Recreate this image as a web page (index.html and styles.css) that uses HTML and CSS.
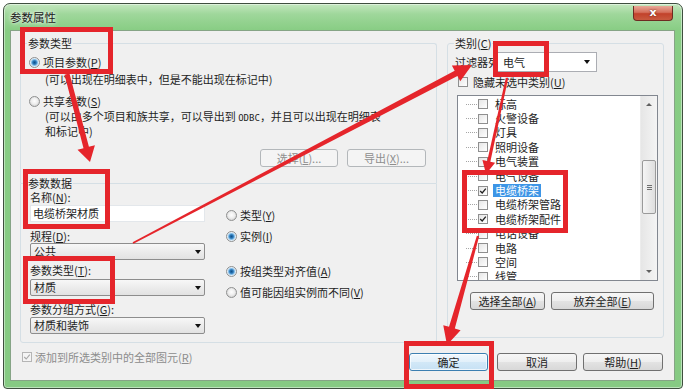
FILE: index.html
```html
<!DOCTYPE html>
<html lang="zh-CN">
<head>
<meta charset="utf-8">
<title>参数属性</title>
<link rel="stylesheet" href="styles.css">
</head>
<body>
<div class="window">
  <div class="titlebar">
    <span class="title">参数属性</span>
    <div class="close">x</div>
  </div>
  <div class="client">
    <div class="main">
      <div class="leftcol">
        <div class="group g1">
          <div class="legend">参数类型</div>
          <div class="opt r1"><span class="radio on"></span>项目参数(<u>P</u>)</div>
          <div class="desc d1">(可以出现在明细表中，但是不能出现在标记中)</div>
          <div class="opt r2"><span class="radio"></span>共享参数(<u>S</u>)</div>
          <div class="desc d2">(可以由多个项目和族共享，可以导出到 <span class="mono">ODBC</span>，并且可以出现在明细表<br>和标记中)</div>
          <div class="btnrow">
            <div class="btn dis w78">选择(<u>L</u>)...</div>
            <div class="btn dis w79">导出(<u>X</u>)...</div>
          </div>
        </div>
        <div class="group g2">
          <div class="legend">参数数据</div>
          <div class="g2body">
            <div class="fields">
              <div class="lbl l1">名称(<u>N</u>):</div>
              <div class="input">电缆桥架材质</div>
              <div class="lbl l2">规程(<u>D</u>):</div>
              <div class="select s1"><span>公共</span><span class="caret"></span></div>
              <div class="lbl l3">参数类型(<u>T</u>):</div>
              <div class="select s2"><span>材质</span><span class="caret"></span></div>
              <div class="lbl l4">参数分组方式(<u>G</u>):</div>
              <div class="select s3"><span>材质和装饰</span><span class="caret"></span></div>
            </div>
            <div class="radios">
              <div class="opt ro1"><span class="radio"></span>类型(<u>Y</u>)</div>
              <div class="opt ro2"><span class="radio on"></span>实例(<u>I</u>)</div>
              <div class="opt ro3"><span class="radio on"></span>按组类型对齐值(<u>A</u>)</div>
              <div class="opt ro4"><span class="radio"></span>值可能因组实例而不同(<u>V</u>)</div>
            </div>
          </div>
        </div>
      </div>
      <div class="group gr">
        <div class="legend lr">类别(<u>C</u>)</div>
        <div class="filter">
          <div class="flabel">过滤器列表(<u>F</u>):</div>
          <div class="combo"><span>电气</span><span class="caret"></span></div>
        </div>
        <div class="hide"><span class="cbox"></span>隐藏未选中类别(<u>U</u>)</div>
        <div class="list">
          <div class="rows">
            <div class="row"><span class="tree"></span><span class="cbox"></span><span class="txt">标高</span></div>
            <div class="row"><span class="tree"></span><span class="cbox"></span><span class="txt">火警设备</span></div>
            <div class="row"><span class="tree"></span><span class="cbox"></span><span class="txt">灯具</span></div>
            <div class="row"><span class="tree"></span><span class="cbox"></span><span class="txt">照明设备</span></div>
            <div class="row"><span class="tree"></span><span class="cbox"></span><span class="txt">电气装置</span></div>
            <div class="row"><span class="tree"></span><span class="cbox"></span><span class="txt">电气设备</span></div>
            <div class="row"><span class="tree"></span><span class="cbox"><svg viewBox="0 0 10 10" width="8" height="8"><path d="M1.5 5 L4 7.5 L8.5 2" fill="none" stroke="#222" stroke-width="1.6"/></svg></span><span class="txt sel">电缆桥架</span></div>
            <div class="row"><span class="tree"></span><span class="cbox"></span><span class="txt">电缆桥架管路</span></div>
            <div class="row"><span class="tree"></span><span class="cbox"><svg viewBox="0 0 10 10" width="8" height="8"><path d="M1.5 5 L4 7.5 L8.5 2" fill="none" stroke="#222" stroke-width="1.6"/></svg></span><span class="txt">电缆桥架配件</span></div>
            <div class="row"><span class="tree"></span><span class="cbox"></span><span class="txt">电话设备</span></div>
            <div class="row"><span class="tree"></span><span class="cbox"></span><span class="txt">电路</span></div>
            <div class="row"><span class="tree"></span><span class="cbox"></span><span class="txt">空间</span></div>
            <div class="row"><span class="tree"></span><span class="cbox"></span><span class="txt">线管</span></div>
          </div>
          <div class="scroll">
            <div class="sarrow"><span class="tri up"></span></div>
            <div class="thumb"><span class="grip"></span><span class="grip"></span><span class="grip"></span></div>
            <div class="spacer"></div>
            <div class="sarrow"><span class="tri down"></span></div>
          </div>
        </div>
        <div class="gbtns">
          <div class="btn w75">选择全部(<u>A</u>)</div>
          <div class="btn w103">放弃全部(<u>E</u>)</div>
        </div>
      </div>
    </div>
    <div class="footer">
      <div class="chkall"><span class="cbox dis"><svg viewBox="0 0 10 10" width="8" height="8"><path d="M1.5 5 L4 7.5 L8.5 2" fill="none" stroke="#a8a8a8" stroke-width="1.4"/></svg></span>添加到所选类别中的全部图元(<u>R</u>)</div>
      <div class="fbtns">
        <div class="btn ok">确定</div>
        <div class="btn cancel">取消</div>
        <div class="btn help">帮助(<u>H</u>)</div>
      </div>
    </div>
  </div>
</div>
<svg class="overlay" width="686" height="392" viewBox="0 0 686 392">
  <g fill="none" stroke="#e5252b" stroke-width="5">
    <rect x="22.5" y="29.5" width="88" height="42"/>
    <rect x="25.5" y="171.5" width="82" height="55"/>
    <rect x="25.5" y="258.5" width="87" height="43"/>
    <rect x="495.5" y="43.5" width="51" height="31"/>
    <rect x="464.5" y="172.5" width="101" height="58"/>
    <rect x="406.5" y="343.5" width="85" height="43"/>
  </g>
  <g fill="#e5252b">
    <polygon points="69.42,73.37 88.92,146.78 94.92,145.21 90,162 77.50,149.77 83.50,148.20 64.58,74.63"/>
    <polygon points="133.42,243.80 457.45,76.03 460.24,81.34 472,65 451.88,65.40 454.67,70.71 132.58,242.20"/>
    <polygon points="508.17,78.26 490.34,161.64 495.13,162.69 486,174 482.43,159.91 487.22,160.96 505.83,77.74"/>
    <polygon points="479.15,236.33 454.81,328.51 460.58,330.15 447,345 443.26,325.23 449.03,326.87 476.85,235.67"/>
  </g>
</svg>
</body>
</html>
```

FILE: styles.css
```css
* { box-sizing: border-box; }
html, body { margin: 0; padding: 0; background: #fff; }
body {
  position: relative;
  width: 686px;
  height: 392px;
  overflow: hidden;
  font-family: "Noto Sans CJK SC", "Microsoft YaHei", sans-serif;
  font-size: 11px;
  color: #1e1e1e;
}
u { text-decoration: underline; text-underline-offset: 1px; }

.window {
  margin: 3px 0 0 3px;
  width: 680px;
  height: 386px;
  border: 1px solid #3f4f3f;
  border-radius: 7px 7px 4px 4px;
  background: linear-gradient(to bottom, #c4e7bf 0px, #9fd79b 10px, #88cd84 26px, #86ca83 100%);
  padding: 0 7px 7px 6px;
  display: flex;
  flex-direction: column;
  box-shadow: inset 0 0 0 1px rgba(255,255,255,0.45);
}
.titlebar {
  height: 26px;
  display: flex;
  align-items: center;
  flex: none;
}
.title {
  font-size: 11.5px;
  color: #1a1a1a;
  text-shadow: 0 0 6px rgba(255,255,255,0.9), 0 0 3px rgba(255,255,255,0.9);
}
.close {
  margin-left: auto;
  margin-right: 2px;
  align-self: flex-start;
  margin-top: 2px;
  width: 40px;
  height: 15px;
  border: 1px solid #6e2a22;
  border-top: none;
  border-radius: 0 0 4px 4px;
  background: linear-gradient(to bottom, #e8a897 0%, #d5705c 45%, #c2422b 55%, #c85a3f 100%);
  color: #fff;
  font-weight: bold;
  font-size: 11px;
  line-height: 13px;
  text-align: center;
  font-family: "DejaVu Sans", sans-serif;
  text-shadow: 0 0 2px #5a1a10;
}
.client {
  flex: 1;
  background: #f0f0f0;
  border: 1px solid #86a486;
  display: flex;
  flex-direction: column;
}
.main {
  display: flex;
  height: 312px;
  padding: 12px 10px 0 9px;
  gap: 10px;
  flex: none;
}
.leftcol {
  width: 417px;
  display: flex;
  flex-direction: column;
  flex: none;
}
.group {
  border: 1px solid #d5dfe5;
  border-radius: 3px;
  display: flex;
  flex-direction: column;
}
.legend {
  align-self: flex-start;
  line-height: 16px;
  margin-top: -9px;
  padding: 0 1px;
  background: #f0f0f0;
  white-space: nowrap;
}
.g1 {
  height: 140px;
  border-bottom: none;
  border-radius: 3px 3px 0 0;
  padding: 0 10px 0 8px;
}
.g1 .legend { margin-left: -2px; }
.opt {
  display: flex;
  align-items: center;
  line-height: 16px;
  white-space: nowrap;
}
.radio {
  flex: none;
  width: 11px;
  height: 11px;
  border-radius: 50%;
  border: 1px solid #8f9090;
  margin-right: 3px;
  background: radial-gradient(circle at 50% 45%, #fefefe 0, #eeeeee 3px, #d6d6d6 5px);
}
.radio.on {
  background: radial-gradient(circle at 50% 50%, #134f86 0, #2a7abb 1.8px, #84bce6 3px, #dcecf8 4px, #f2f2f2 5px);
}
.r1 { margin-top: 3px; }
.d1 { margin-top: 1px; line-height: 16px; padding-left: 16px; white-space: nowrap; }
.r2 { margin-top: 6px; }
.d2 { margin-top: 1px; line-height: 13px; padding-left: 16px; white-space: nowrap; }
.mono { font-family: "DejaVu Sans Mono", monospace; font-size: 9px; }
.btnrow {
  display: flex;
  justify-content: flex-end;
  gap: 9px;
  margin-top: 11px;
}
.btn {
  height: 18px;
  line-height: 16px;
  text-align: center;
  border: 1px solid #707070;
  border-radius: 3px;
  background: linear-gradient(to bottom, #f6f6f6 0%, #eeeeee 50%, #e3e3e3 51%, #d8d8d8 100%);
  white-space: nowrap;
  flex: none;
}
.btn.dis {
  border-color: #b3b7ba;
  background: #f4f4f4;
  color: #8e8e8e;
}
.w78 { width: 78px; }
.w79 { width: 79px; }
.w75 { width: 75px; }
.w103 { width: 103px; }

.g2 {
  height: 160px;
  padding: 0 0 0 9px;
  border-radius: 0 0 3px 3px;
}
.g2 .legend { margin-left: -3px; }
.g2body { display: flex; }
.fields {
  width: 175px;
  flex: none;
  display: flex;
  flex-direction: column;
}
.lbl { line-height: 14px; white-space: nowrap; }
.l1 { margin-top: -1px; }
.l2 { margin-top: 7px; }
.l3 { margin-top: 3px; }
.l4 { margin-top: 6px; }
.input {
  height: 17px;
  margin-top: 1px;
  background: #fff;
  border: 1px solid #e3e7eb;
  padding-left: 2px;
  line-height: 15px;
}
.select {
  height: 17px;
  border: 1px solid #8d8d8d;
  border-radius: 2px;
  background: linear-gradient(to bottom, #f7f7f7 0%, #ececec 50%, #e2e2e2 100%);
  display: flex;
  align-items: center;
  padding-left: 3px;
  line-height: 15px;
}
.s2 { margin-top: 2px; }
.s3 { margin-top: 1px; }
.caret {
  margin-left: auto;
  margin-right: 3px;
  width: 0;
  height: 0;
  border-left: 3.5px solid transparent;
  border-right: 3.5px solid transparent;
  border-top: 4px solid #111;
}
.radios {
  margin-left: 21px;
  display: flex;
  flex-direction: column;
}
.ro1 { margin-top: 16px; }
.ro2 { margin-top: 5px; }
.ro3 { margin-top: 19px; }
.ro4 { margin-top: 5px; }

.gr {
  width: 217px;
  height: 295px;
  flex: none;
}
.lr { margin-left: 6px; }
.filter {
  display: flex;
  align-items: center;
  height: 20px;
  margin-top: 1px;
  margin-left: 7px;
}
.flabel {
  width: 42px;
  overflow: hidden;
  white-space: nowrap;
  flex: none;
}
.combo {
  width: 100px;
  height: 20px;
  border: 1px solid #abadb3;
  background: #fff;
  display: flex;
  align-items: center;
  padding-left: 5px;
}
.combo .caret { margin-right: 6px; }
.hide {
  display: flex;
  align-items: center;
  margin-top: 3px;
  margin-left: 10px;
  line-height: 14px;
  white-space: nowrap;
}
.cbox {
  flex: none;
  width: 10px;
  height: 10px;
  border: 1px solid #8f8f8f;
  background: linear-gradient(135deg, #e6e6e6, #ffffff);
  display: flex;
  align-items: center;
  justify-content: center;
}
.hide .cbox { margin-right: 5px; }
.list {
  margin-top: 6px;
  margin-left: 9px;
  width: 201px;
  height: 186px;
  border: 1px solid #828790;
  background: #fff;
  display: flex;
}
.rows {
  flex: 1;
  padding-top: 1px;
  overflow: hidden;
}
.row {
  height: 14.4px;
  display: flex;
  align-items: center;
  padding-left: 8px;
  white-space: nowrap;
}
.tree {
  width: 11px;
  height: 0;
  border-top: 1px dotted #a5a5a5;
  flex: none;
}
.row .cbox { margin-left: 1px; }
.txt {
  margin-left: 5px;
  padding: 0 2px;
  line-height: 13px;
}
.txt.sel {
  background: #3d95e6;
  color: #fff;
}
.scroll {
  width: 17px;
  flex: none;
  display: flex;
  flex-direction: column;
  background: linear-gradient(to right, #e6e6e6, #f4f4f4);
  border-left: 1px solid #ececec;
}
.sarrow {
  height: 17px;
  display: flex;
  align-items: center;
  justify-content: center;
  flex: none;
}
.tri { width: 0; height: 0; border-left: 3px solid transparent; border-right: 3px solid transparent; }
.tri.up { border-bottom: 3px solid #606060; }
.tri.down { border-top: 3px solid #606060; }
.thumb {
  margin: 47px 1px 0 1px;
  height: 54px;
  border: 1px solid #9a9a9a;
  border-radius: 2px;
  background: linear-gradient(to right, #f5f5f5, #dedede);
  display: flex;
  flex-direction: column;
  align-items: center;
  justify-content: center;
  gap: 1px;
  flex: none;
}
.grip { width: 5px; height: 1px; background: #6e6e6e; }
.spacer { flex: 1; }
.gbtns {
  display: flex;
  gap: 6px;
  margin-top: 11px;
  margin-left: 22px;
}

.footer {
  display: flex;
  align-items: flex-start;
  padding: 0 11px;
}
.chkall {
  display: flex;
  align-items: center;
  margin-top: 7px;
  line-height: 14px;
  color: #8c8c8c;
  white-space: nowrap;
}
.cbox.dis { border-color: #b5b5b5; background: #f4f4f4; margin-right: 3px; }
.fbtns {
  margin-left: auto;
  margin-top: 10px;
  display: flex;
}
.ok {
  width: 79px;
  border-color: #3c7fb1;
  background: linear-gradient(to bottom, #f1f8fd 0%, #e2f0fa 50%, #d2e8f7 51%, #c6e1f4 100%);
  box-shadow: inset 0 0 0 1px rgba(255,255,255,0.7);
}
.cancel { width: 80px; margin-left: 9px; }
.help { width: 80px; margin-left: 6px; }

.overlay {
  position: absolute;
  left: 0;
  top: 0;
  pointer-events: none;
}
```
